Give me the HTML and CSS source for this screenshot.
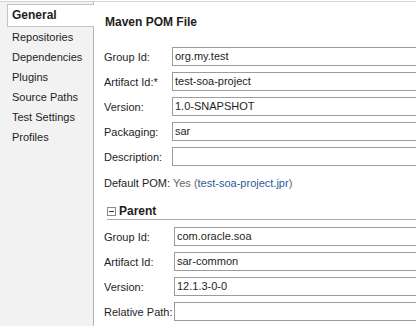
FILE: index.html
```html
<!DOCTYPE html>
<html lang="en">
<head>
    <meta charset="UTF-8">
    <title>Project Properties - Maven</title>
    <link rel="stylesheet" href="styles.css">
</head>
<body>
    <div class="dialog">
        <nav class="side-nav">
            <div class="nav-item active">General</div>
            <div class="nav-item">Repositories</div>
            <div class="nav-item">Dependencies</div>
            <div class="nav-item">Plugins</div>
            <div class="nav-item">Source Paths</div>
            <div class="nav-item">Test Settings</div>
            <div class="nav-item">Profiles</div>
        </nav>

        <main class="content">
            <h1 class="page-title">Maven POM File</h1>

            <div class="form-grid">
                <label>Group Id:</label>
                <div class="field">org.my.test</div>

                <label>Artifact Id:*</label>
                <div class="field">test-soa-project</div>

                <label>Version:</label>
                <div class="field">1.0-SNAPSHOT</div>

                <label>Packaging:</label>
                <div class="field">sar</div>

                <label>Description:</label>
                <div class="field"></div>
            </div>

            <div class="default-pom">
                Default POM: <span class="muted">Yes (<a href="#" class="link">test-soa-project.jpr</a>)</span>
            </div>

            <div class="section-head">
                <span class="toggle"></span>
                <span>Parent</span>
            </div>

            <div class="form-grid parent-grid">
                <label>Group Id:</label>
                <div class="field">com.oracle.soa</div>

                <label>Artifact Id:</label>
                <div class="field">sar-common</div>

                <label>Version:</label>
                <div class="field">12.1.3-0-0</div>

                <label>Relative Path:</label>
                <div class="field"></div>
            </div>
        </main>
    </div>
</body>
</html>
```

FILE: styles.css
```css
body {
    margin: 0;
    padding: 0;
    font-family: "Liberation Sans", Arial, sans-serif;
    font-size: 11px;
    color: #1e1e1e;
    background: #fff;
    overflow: hidden;
}

.dialog {
    display: flex;
    height: 326px;
    border-top: 1px solid #d4d4d4;
    margin-top: 1px;
}

/* left category list */
.side-nav {
    width: 93px;
    flex-shrink: 0;
    background: #f2f2f2;
    border-right: 1px solid #b4b4b4;
    padding-top: 2px;
}

.nav-item {
    height: 20px;
    line-height: 20px;
    padding-left: 12px;
}

.nav-item.active {
    height: 21px;
    line-height: 21px;
    margin: 0 -1px 0 7px;
    padding-left: 4px;
    background: #fff;
    border: 1px solid #c4c4c4;
    border-right: none;
    font-weight: bold;
    font-size: 12px;
}

/* right form */
.content {
    flex: 1;
    padding-left: 10px;
    overflow: hidden;
}

.page-title {
    font-size: 12px;
    font-weight: bold;
    margin: 13px 0 0 1px;
    line-height: 14px;
}

.form-grid {
    display: grid;
    grid-template-columns: 68px 300px;
    grid-auto-rows: 19px;
    row-gap: 6px;
    margin-top: 18px;
    align-items: center;
}

.form-grid label {
    white-space: nowrap;
}

.field {
    height: 17px;
    line-height: 17px;
    border: 1px solid #9c9c9c;
    padding-left: 2px;
    background: #fff;
}

.default-pom {
    margin-top: 10px;
    line-height: 14px;
}

.muted {
    color: #666;
}

.link {
    color: #2a5a9c;
    text-decoration: none;
}

.section-head {
    display: flex;
    align-items: center;
    gap: 3px;
    margin-top: 14px;
    margin-left: 3px;
    padding-bottom: 1px;
    border-bottom: 1px solid #a8a8a8;
    font-weight: bold;
    font-size: 12px;
}

.toggle {
    width: 7px;
    height: 7px;
    border: 1px solid #8a8a8a;
    position: relative;
}

.toggle::after {
    content: "";
    position: absolute;
    left: 1px;
    top: 3px;
    width: 5px;
    height: 1px;
    background: #333;
}

.parent-grid {
    margin-top: 7px;
    grid-template-columns: 70px 300px;
}
```
